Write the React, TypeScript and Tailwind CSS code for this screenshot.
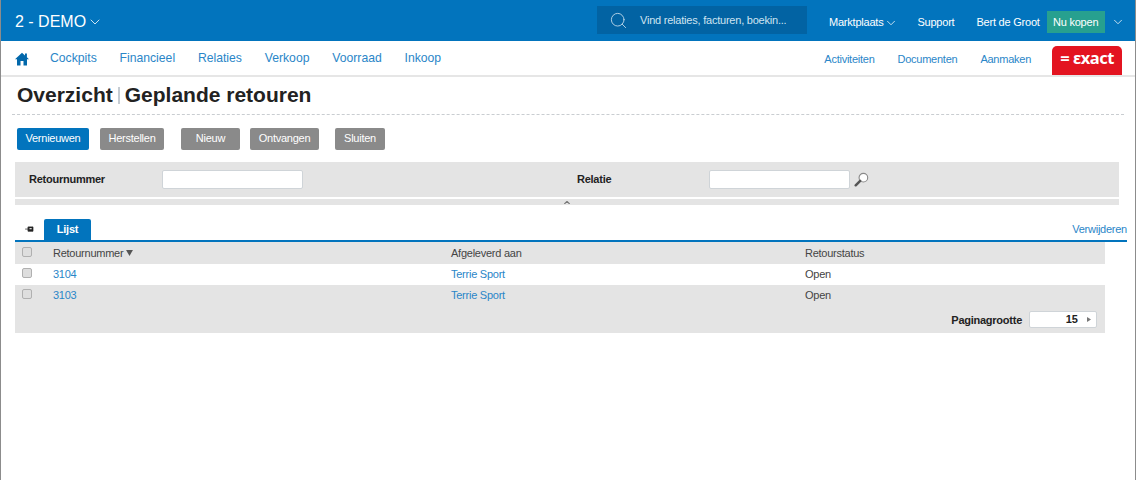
import { ChevronDown, Search } from "lucide-react";

const navItems = ["Cockpits", "Financieel", "Relaties", "Verkoop", "Voorraad", "Inkoop"];
const rows = [
  { id: "3104", to: "Terrie Sport", status: "Open", shaded: false },
  { id: "3103", to: "Terrie Sport", status: "Open", shaded: true },
];

const Checkbox = () => (
  <span className="block w-[10px] h-[10px] mb-[2px] rounded-[2px] border border-[#b0b0b0] bg-[#dedede]" />
);

const ActionButton = ({ label, width, primary }: { label: string; width: string; primary?: boolean }) => (
  <div className={`${width} h-[22px] pb-[1px] flex items-center justify-center rounded-[2px] text-[11px] tracking-[-0.25px] text-white ${primary ? "bg-[#0274bd]" : "bg-[#8a8a8a]"}`}>
    {label}
  </div>
);

const App = () => {
  return (
    <div className="w-[1136px] h-[480px] overflow-hidden bg-white border-x border-[#8c8c8c] text-[#333] font-['Liberation_Sans',Arial,sans-serif]">
      {/* Top bar */}
      <div className="h-[41px] bg-[#0274bd] flex items-center text-white">
        <div className="flex items-center pl-[14px] pt-[2px] w-[596px] shrink-0">
          <span className="text-[16px]">2 - DEMO</span>
          <ChevronDown className="w-[16px] h-[16px] ml-[1px] mt-[1px]" strokeWidth={1.2} />
        </div>
        <div className="w-[210px] h-[28px] shrink-0 bg-[#0263a3] flex items-center pl-[12px] mb-[1px]">
          <Search className="w-[19px] h-[19px] text-[#c4dcec]" strokeWidth={1.1} />
          <span className="ml-[12px] mt-[1px] text-[11px] tracking-[-0.22px] text-[#cfe3f1] whitespace-nowrap">Vind relaties, facturen, boekin...</span>
        </div>
        <div className="flex items-center ml-[22px] pt-[3px] text-[11px] tracking-[-0.22px] whitespace-nowrap">
          <span>Marktplaats</span>
          <ChevronDown className="w-[14px] h-[14px] ml-[1px] mt-[1px]" strokeWidth={1.3} />
          <span className="ml-[19px]">Support</span>
          <span className="ml-[22px]">Bert de Groot</span>
          <div className="ml-[7px] w-[58px] h-[22px] bg-[#27a08f] flex items-center justify-center">Nu kopen</div>
          <ChevronDown className="w-[14px] h-[14px] ml-[6px]" strokeWidth={1.3} />
        </div>
      </div>

      {/* Nav */}
      <div className="h-[36px] flex border-b-2 border-[#e6e6e6]">
        <div className="flex items-center pl-[14px]">
          <svg viewBox="0 0 16 16" className="w-[14px] h-[14px] mt-[1px]">
            <path d="M8 .8 0 8.2h2.3V15.4h4V10.4h3.4v5h4V8.2H16L13.6 6V1.6h-2.2v2.4z" fill="#0268ab" />
          </svg>
          <div className="flex ml-[21px] gap-[22.8px] text-[12.2px] text-[#2a86c8] mt-[1px]">
            {navItems.map((item) => (
              <span key={item}>{item}</span>
            ))}
          </div>
        </div>
        <div className="ml-auto flex items-center text-[11px] tracking-[-0.25px] text-[#2a86c8]">
          <span className="mt-[3px]">Activiteiten</span>
          <span className="ml-[23px] mt-[3px]">Documenten</span>
          <span className="ml-[23px] mt-[3px]">Aanmaken</span>
          <div className="ml-[21px] mr-[13px] mt-[5px] w-[70px] h-[29px] pb-[4px] bg-[#e31420] rounded-t-[5px] flex items-center justify-center text-white font-bold text-[16.5px] font-['Noto_Sans',sans-serif] tracking-[-0.5px]">
            = εxact
          </div>
        </div>
      </div>

      {/* Title */}
      <div className="mx-[11px] h-[38px] pb-[2px] border-b border-dashed border-[#c9cdd1] pl-[5px] flex items-center text-[21px] font-bold text-[#222]">
        <span>Overzicht</span>
        <span className="mx-[5px] mt-[2px] w-[2px] h-[17px] bg-[#c5ccd3]" />
        <span>Geplande retouren</span>
      </div>

      {/* Actions */}
      <div className="flex ml-[16px] mt-[13px]">
        <ActionButton label="Vernieuwen" width="w-[72px]" primary />
        <div className="ml-[11px]"><ActionButton label="Herstellen" width="w-[64px]" /></div>
        <div className="ml-[17px]"><ActionButton label="Nieuw" width="w-[59px]" /></div>
        <div className="ml-[10px]"><ActionButton label="Ontvangen" width="w-[69px]" /></div>
        <div className="ml-[16px]"><ActionButton label="Sluiten" width="w-[50px]" /></div>
      </div>

      {/* Filters */}
      <div className="ml-[14px] w-[1104px] mt-[12px]">
        <div className="h-[35px] bg-[#e4e4e4] flex items-center text-[11px] tracking-[-0.25px] font-bold text-[#222]">
          <span className="ml-[14px] w-[133px]">Retournummer</span>
          <div className="w-[141px] h-[19px] bg-white border border-[#cfd4d8] rounded-[2px]" />
          <span className="ml-[274px] w-[132px]">Relatie</span>
          <div className="w-[141px] h-[19px] bg-white border border-[#cfd4d8] rounded-[2px]" />
          <svg viewBox="0 0 16 16" className="w-[15px] h-[15px] ml-[4px] mb-[1px]">
            <circle cx="10" cy="6" r="4.6" fill="#fff" stroke="#8a8a8a" strokeWidth="1.2" />
            <path d="M6.6 9.4 1.8 14.2" stroke="#555" strokeWidth="2.6" strokeLinecap="round" />
          </svg>
        </div>
        <div className="mt-[2px] h-[6px] bg-[#e4e4e4] flex items-center justify-center">
          <svg viewBox="0 0 8 4" className="w-[6px] h-[3px]">
            <path d="M.5 4 4 .5 7.5 4" fill="none" stroke="#777" strokeWidth="1.5" />
          </svg>
        </div>
      </div>

      {/* Tabs */}
      <div className="ml-[14px] w-[1112px] mt-[14px] h-[23px] flex items-end border-b-2 border-[#0274bd]">
        <div className="w-[29px] h-[21px] flex items-center justify-center">
          <svg viewBox="0 0 10 8" className="w-[9px] h-[7px]">
            <path d="M3.5 1h5.5v5H3.5zM0 3.5h3.5M3.5 1v5" fill="#222" stroke="#222" strokeWidth="0.8" />
            <path d="M5 2.5h2.5v1.2H5z" fill="#fff" />
          </svg>
        </div>
        <div className="w-[47px] h-[21px] bg-[#0274bd] rounded-t-[2px] flex items-center justify-center text-[11px] tracking-[-0.25px] font-bold text-white">
          Lijst
        </div>
        <span className="ml-auto mb-[3px] text-[11px] tracking-[-0.25px] text-[#2a86c8]">Verwijderen</span>
      </div>

      {/* Table */}
      <div className="ml-[14px] w-[1090px] text-[11px] tracking-[-0.25px]">
        <div className="h-[22px] bg-[#e4e4e4] flex items-center text-[#444]">
          <div className="w-[38px] pl-[7px]"><Checkbox /></div>
          <div className="w-[398px] flex items-center">
            Retournummer
            <svg viewBox="0 0 8 7" className="w-[7px] h-[6px] ml-[3px]"><path d="M0 0h8L4 7z" fill="#555" /></svg>
          </div>
          <div className="w-[354px]">Afgeleverd aan</div>
          <div>Retourstatus</div>
        </div>
        {rows.map((row) => (
          <div key={row.id} className={`h-[20.5px] flex items-center ${row.shaded ? "bg-[#e4e4e4]" : "bg-white"}`}>
            <div className="w-[38px] pl-[7px]"><Checkbox /></div>
            <div className="w-[398px] text-[#2a86c8]">{row.id}</div>
            <div className="w-[354px] text-[#2a86c8]">{row.to}</div>
            <div className="text-[#444]">{row.status}</div>
          </div>
        ))}
        <div className="h-[27.5px] bg-[#e4e4e4] flex items-start justify-end pr-[8px]">
          <span className="font-bold text-[#222] mr-[7px] mt-[7px]">Paginagrootte</span>
          <div className="mt-[6px] w-[68px] h-[17px] bg-white border border-[#cfd4d8] rounded-[2px] flex items-center justify-end font-bold text-[#222] tracking-normal">
            <span>15</span>
            <svg viewBox="0 0 5 6" className="w-[4px] h-[5px] ml-[9px] mr-[5px]"><path d="M0 0l5 3-5 3z" fill="#777" /></svg>
          </div>
        </div>
      </div>
    </div>
  );
};

export default App;
